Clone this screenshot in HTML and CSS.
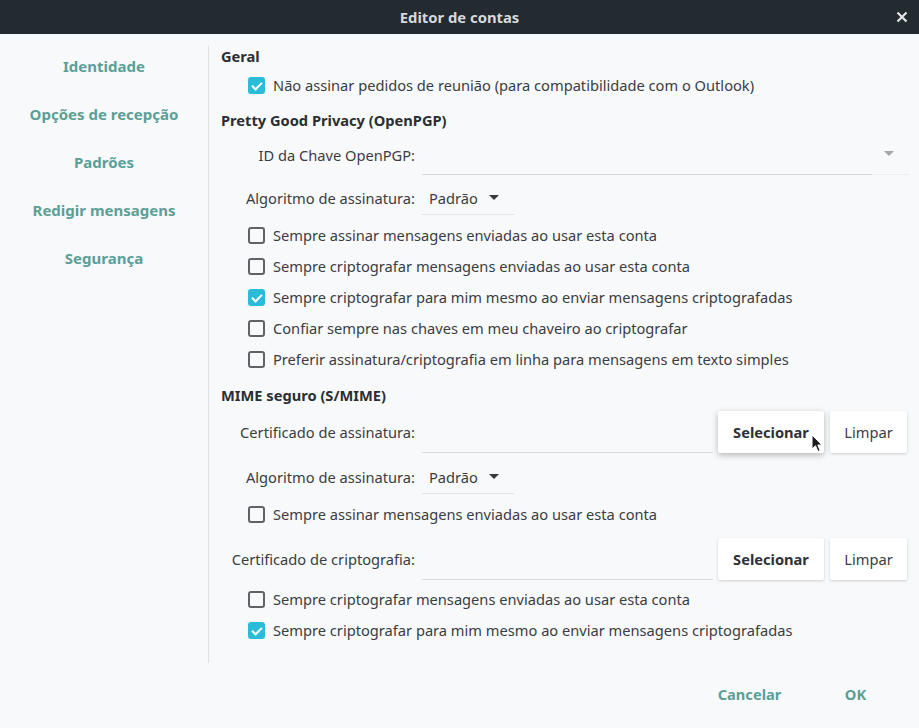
FILE: index.html
```html
<!DOCTYPE html>
<html lang="pt">
<head>
<meta charset="utf-8">
<title>Editor de contas</title>
<link rel="stylesheet" href="styles.css">
</head>
<body>
<div class="window">
  <header class="titlebar">
    <span class="title">Editor de contas</span>
    <span class="close">
      <svg width="12" height="12" viewBox="0 0 12 12"><path d="M1.5 1.5 L10.5 10.5 M10.5 1.5 L1.5 10.5" stroke="#e4e6e8" stroke-width="2.2" fill="none"/></svg>
    </span>
  </header>
  <div class="main">
    <nav class="sidebar">
      <div class="nav-item">Identidade</div>
      <div class="nav-item">Opções de recepção</div>
      <div class="nav-item">Padrões</div>
      <div class="nav-item">Redigir mensagens</div>
      <div class="nav-item">Segurança</div>
    </nav>
    <section class="content">
      <div class="hdr">Geral</div>
      <label class="cb-row m1"><span class="cb checked"></span>Não assinar pedidos de reunião (para compatibilidade com o Outlook)</label>

      <div class="hdr m10">Pretty Good Privacy (OpenPGP)</div>
      <div class="field-row h38 m4">
        <span class="flabel">ID da Chave OpenPGP:</span>
        <div class="keycombo"><span class="keyarrow"></span></div>
      </div>
      <div class="field-row h36 m6">
        <span class="flabel">Algoritmo de assinatura:</span>
        <div class="combo"><span>Padrão</span><span class="arrow"></span></div>
      </div>
      <label class="cb-row m3"><span class="cb"></span>Sempre assinar mensagens enviadas ao usar esta conta</label>
      <label class="cb-row"><span class="cb"></span>Sempre criptografar mensagens enviadas ao usar esta conta</label>
      <label class="cb-row"><span class="cb checked"></span>Sempre criptografar para mim mesmo ao enviar mensagens criptografadas</label>
      <label class="cb-row"><span class="cb"></span>Confiar sempre nas chaves em meu chaveiro ao criptografar</label>
      <label class="cb-row"><span class="cb"></span>Preferir assinatura/criptografia em linha para mensagens em texto simples</label>

      <div class="hdr m11">MIME seguro (S/MIME)</div>
      <div class="field-row h42 m4">
        <span class="flabel">Certificado de assinatura:</span>
        <div class="cert-field"></div>
        <button class="btn sel hover">Selecionar</button>
        <button class="btn clr">Limpar</button>
      </div>
      <div class="field-row h36 m6">
        <span class="flabel">Algoritmo de assinatura:</span>
        <div class="combo"><span>Padrão</span><span class="arrow"></span></div>
      </div>
      <label class="cb-row m3"><span class="cb"></span>Sempre assinar mensagens enviadas ao usar esta conta</label>
      <div class="field-row h42 m9">
        <span class="flabel">Certificado de criptografia:</span>
        <div class="cert-field"></div>
        <button class="btn sel">Selecionar</button>
        <button class="btn clr">Limpar</button>
      </div>
      <label class="cb-row m3"><span class="cb"></span>Sempre criptografar mensagens enviadas ao usar esta conta</label>
      <label class="cb-row"><span class="cb checked"></span>Sempre criptografar para mim mesmo ao enviar mensagens criptografadas</label>
    </section>
  </div>
  <footer class="footer">
    <button class="fbtn">Cancelar</button>
    <button class="fbtn">OK</button>
  </footer>
  <svg class="cursor" width="12" height="19" viewBox="0 0 12 19"><path d="M1 1 L1 15 L4.5 11.8 L7 17.5 L9.2 16.5 L6.8 11 L11 11 Z" fill="#1c1e20" stroke="#ffffff" stroke-width="1"/></svg>
</div>
</body>
</html>
```

FILE: styles.css
```css
* { box-sizing: border-box; }
html, body { margin: 0; padding: 0; }
body {
  width: 919px;
  height: 728px;
  overflow: hidden;
  background: #f8f9fb;
  font-family: "Noto Sans", "Open Sans", sans-serif;
  font-size: 14.65px;
  color: #3a3d41;
}
.window { position: relative; width: 919px; height: 728px; display: flex; flex-direction: column; }

.titlebar {
  height: 34px;
  background: #232a30;
  display: flex;
  align-items: center;
  justify-content: center;
  position: relative;
  flex: none;
}
.title { color: #d6d9dc; font-weight: bold; font-size: 14.8px; line-height: 32px; }
.close { position: absolute; right: 11px; top: 11px; width: 12px; height: 12px; display: flex; }

.main { display: flex; flex: none; }
.sidebar { width: 208px; padding-top: 8px; flex: none; }
.nav-item {
  height: 48px;
  line-height: 48px;
  text-align: center;
  color: #5b9f97;
  font-weight: bold;
  font-size: 15px;
}
.content {
  margin-top: 12px;
  height: 617px;
  width: 711px;
  border-left: 1px solid #dfe1e4;
  padding: 0 12px 0 12px;
}
.hdr { height: 22px; line-height: 20px; font-weight: bold; color: #2b2e32; }
.cb-row {
  display: flex;
  align-items: center;
  height: 31px;
  padding-left: 27px;
  color: #3a3d41;
  white-space: nowrap;
}
.m1 { margin-top: 1px; }
.m3 { margin-top: 3px; }
.m4 { margin-top: 4px; }
.m6 { margin-top: 6px; }
.m9 { margin-top: 9px; }
.m10 { margin-top: 10px; }
.m11 { margin-top: 11px; }
.cb {
  width: 17px;
  height: 17px;
  border: 2px solid #5f6367;
  border-radius: 3px;
  margin-right: 8px;
  flex: none;
  position: relative;
  top: 1px;
}
.cb.checked { background: #2bbdd8; border-color: #2bbdd8; }
.cb.checked::after {
  content: "";
  position: absolute;
  left: 3.5px;
  top: 1px;
  width: 4px;
  height: 8px;
  border: solid #ffffff;
  border-width: 0 2px 2px 0;
  transform: rotate(45deg);
}

.field-row { display: flex; align-items: center; }
.h36 { height: 36px; }
.h38 { height: 38px; }
.h42 { height: 42px; }
.flabel { width: 194px; text-align: right; flex: none; margin-right: 7px; color: #3a3d41; white-space: nowrap; }

.keycombo {
  position: relative;
  width: 488px;
  height: 39px;
  border-bottom: 1px solid #eceef0;
  flex: none;
  align-self: flex-start;
}
.keycombo::before {
  content: "";
  position: absolute;
  left: 0; bottom: -1px;
  width: 450px;
  border-bottom: 1px solid #d3d5d8;
}
.keyarrow {
  position: absolute;
  left: 462px;
  top: 15px;
  width: 0; height: 0;
  border-left: 5px solid transparent;
  border-right: 5px solid transparent;
  border-top: 5px solid #a4a7ab;
}
.combo {
  width: 92px;
  height: 34px;
  display: flex;
  align-items: center;
  padding-left: 7px;
  border-bottom: 1px solid #e2e4e6;
  margin-top: 1px;
  align-self: flex-start;
  color: #3a3d41;
}
.arrow {
  margin-left: 11px;
  width: 0; height: 0;
  border-left: 5px solid transparent;
  border-right: 5px solid transparent;
  border-top: 5px solid #35383c;
}
.cert-field {
  width: 291px;
  height: 42px;
  border-bottom: 1px solid #d8dadd;
  align-self: flex-start;
  flex: none;
}
.btn {
  height: 42px;
  background: #ffffff;
  border: none;
  border-radius: 2px;
  font-family: inherit;
  font-size: 14.65px;
  color: #3a3d41;
  box-shadow: 0 1px 3px rgba(0,0,0,0.18);
  padding: 0;
  flex: none;
}
.btn.sel { width: 106px; margin-left: 5px; font-weight: bold; color: #2e3135; }
.btn.sel.hover { box-shadow: 0 2px 6px rgba(0,0,0,0.28); }
.btn.clr { width: 77px; margin-left: 6px; }

.footer {
  flex: 1;
  display: flex;
  justify-content: flex-end;
  align-items: center;
  padding-right: 13px;
  gap: 5px;
  padding-bottom: 3px;
}
.fbtn {
  width: 101px;
  height: 40px;
  background: transparent;
  border: none;
  font-family: inherit;
  font-size: 14.65px;
  font-weight: bold;
  color: #5b9f97;
  padding: 0;
}
.cursor { position: absolute; left: 811px; top: 434px; }
```
